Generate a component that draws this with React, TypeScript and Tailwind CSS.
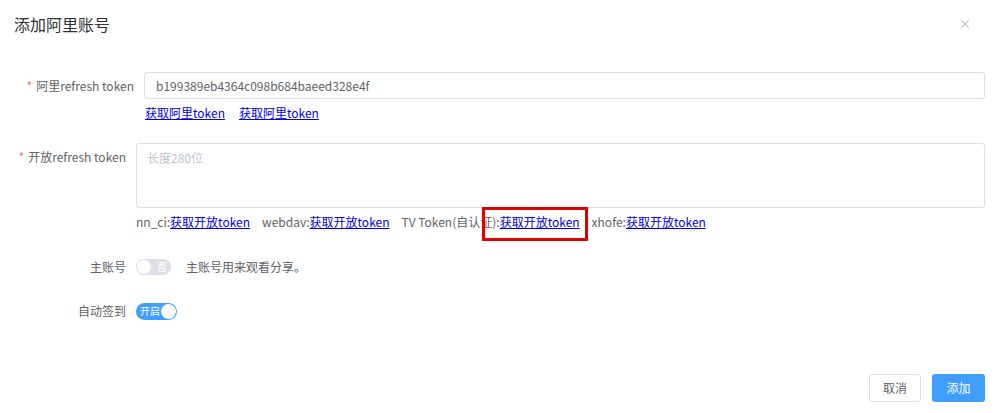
import { X } from 'lucide-react';

const font = { fontFamily: '"Noto Sans CJK SC", "Noto Sans", sans-serif' };

function Switch({ on, text }: { on: boolean; text: string }) {
  if (on) {
    return (
      <div className="flex h-[17px] w-[41px] items-center justify-between rounded-full bg-[#409eff] pl-[4px] pr-[1px]">
        <span className="text-[10px] leading-none text-white">{text}</span>
        <span className="h-[15px] w-[15px] rounded-full bg-white" />
      </div>
    );
  }
  return (
    <div className="flex h-[16px] w-[35px] items-center justify-between rounded-full bg-[#dcdfe6] pl-[1px] pr-[4px]">
      <span className="h-[14px] w-[14px] rounded-full bg-white" />
      <span className="text-[10px] leading-none text-white">{text}</span>
    </div>
  );
}

export default function App() {
  return (
    <div style={font} className="relative h-[413px] w-[1000px] overflow-hidden bg-white text-[12px] text-[#606266]">
      {/* Header */}
      <div className="flex items-center justify-between pl-[14px] pr-[28px] pt-[14px]">
        <h2 className="text-[16px] leading-[20px] text-[#303133]">添加阿里账号</h2>
        <X className="size-[14px] text-[#909399]" strokeWidth={1.3} />
      </div>

      {/* Form */}
      <div className="mt-[38px] pr-[15px]">
        <div className="flex items-center">
          <label className="w-[134px] text-right">
            <span className="mr-[4px] text-[#f56c6c]">*</span>阿里refresh token
          </label>
          <div className="ml-[10px] flex h-[27px] flex-1 items-center rounded-[3px] border border-[#dcdfe6] px-[11px] text-[#606266]">
            b199389eb4364c098b684baeed328e4f
          </div>
        </div>
        <div className="ml-[145px] mt-[5px] flex gap-[14px] leading-[18px]">
          <a className="text-[#0000ee] underline">获取阿里token</a>
          <a className="text-[#0000ee] underline">获取阿里token</a>
        </div>

        <div className="mt-[21px] flex items-start">
          <label className="w-[126px] pt-[5px] text-right">
            <span className="mr-[4px] text-[#f56c6c]">*</span>开放refresh token
          </label>
          <div className="ml-[10px] h-[65px] flex-1 rounded-[3px] border border-[#dcdfe6] px-[10px] pt-[5px] text-[#c0c4cc]">
            长度280位
          </div>
        </div>
        <div className="ml-[136px] mt-[5px] flex gap-[12px] leading-[18px]">
          <span>nn_ci:<a className="text-[#0000ee] underline">获取开放token</a></span>
          <span>webdav:<a className="text-[#0000ee] underline">获取开放token</a></span>
          <span>TV Token(自认证):<a className="text-[#0000ee] underline">获取开放token</a></span>
          <span>xhofe:<a className="text-[#0000ee] underline">获取开放token</a></span>
        </div>

        <div className="mt-[27px] flex items-center">
          <label className="w-[126px] text-right">主账号</label>
          <div className="ml-[10px]">
            <Switch on={false} text="否" />
          </div>
          <span className="ml-[15px]">主账号用来观看分享。</span>
        </div>

        <div className="mt-[26px] flex items-center">
          <label className="w-[126px] text-right">自动签到</label>
          <div className="ml-[10px]">
            <Switch on text="开启" />
          </div>
        </div>
      </div>

      {/* Footer */}
      <div className="mt-[54px] flex justify-end gap-[11px] pr-[15px]">
        <button className="h-[28px] w-[52px] rounded-[3px] border border-[#dcdfe6] bg-white text-[12px] text-[#606266]">取消</button>
        <button className="h-[28px] w-[53px] rounded-[3px] bg-[#409eff] text-[12px] text-white">添加</button>
      </div>

      {/* annotation */}
      <div className="absolute left-[482px] top-[207px] h-[34px] w-[106px] border-[3px] border-[#e00000]" />
    </div>
  );
}
